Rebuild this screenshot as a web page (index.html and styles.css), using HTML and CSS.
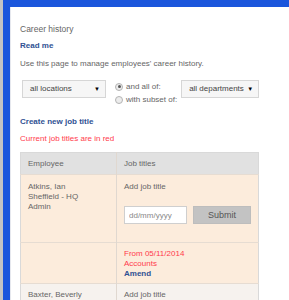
FILE: index.html
```html
<!DOCTYPE html>
<html lang="en">
<head>
    <title>Career history</title>

    <link rel="stylesheet" href="styles.css">

</head>
<body>
  <div class="frame">
    <div class="content">
      <p class="title">Career history</p>

      <p class="link read-me">Read me</p>

      <p class="intro">Use this page to manage employees' career history.</p>

      <div class="filters">
        <div class="select locations">
          <span>all locations</span>
          <span class="arrow">&#9660;</span>
        </div>

        <div class="radios">
          <label class="radio-row">
            <span class="radio checked"></span>
            and all of:
          </label>
          <label class="radio-row">
            <span class="radio"></span>
            with subset of:
          </label>
        </div>

        <div class="select departments">
          <span>all departments</span>
          <span class="arrow">&#9660;</span>
        </div>
      </div>

      <p class="link create">Create new job title</p>

      <p class="note">Current job titles are in red</p>

      <table class="history">
        <tr>
          <th class="employee-col">Employee</th>
          <th>Job titles</th>
        </tr>
        <tr class="odd">
          <td>
            Atkins, Ian<br>
            Sheffield - HQ<br>
            Admin
          </td>
          <td class="add-cell">
            Add job title
            <div class="add-form">
              <input class="date-input" type="text" placeholder="dd/mm/yyyy">
              <button class="submit-button">Submit</button>
            </div>
          </td>
        </tr>
        <tr class="odd">
          <td></td>
          <td class="job-cell">
            <span class="current">From 05/11/2014</span><br>
            <span class="current">Accounts</span><br>
            <span class="amend">Amend</span>
          </td>
        </tr>
        <tr class="even">
          <td>
            Baxter, Beverly<br>
            Leeds<br>
            Sales
          </td>
          <td class="add-cell">
            Add job title
            <div class="add-form">
              <input class="date-input" type="text" placeholder="dd/mm/yyyy">
              <button class="submit-button">Submit</button>
            </div>
          </td>
        </tr>
      </table>
    </div>
  </div>
</body>
</html>
```

FILE: styles.css
```css
body {
  margin: 0;
  background-color: #c4c4c4;
  font-family: "Liberation Sans", Arial, sans-serif;
  font-size: 8px;
  line-height: 10px;
  color: #666;
}

p {
  margin: 0;
}

.frame {
  margin-left: 3px;
  border-top: 7px solid #1b56dc;
  border-left: 7px solid #1b56dc;
  background-color: white;
}

.content {
  padding: 17px 10px 20px 9px;
  border-left: 1px solid #e6e8ee;
}

.title {
  font-size: 8.5px;
}

.link {
  font-weight: bold;
  color: #2f5193;
}

.read-me {
  margin-top: 7px;
}

.intro {
  margin-top: 8px;
}

.filters {
  display: flex;
  align-items: flex-start;
  margin-top: 11px;
}

.select {
  display: flex;
  align-items: center;
  justify-content: space-between;
  box-sizing: border-box;
  height: 18px;
  padding: 0 5px 0 7px;
  border: 1px solid #d6d6d6;
  background-color: #f6f6f6;
  color: #444;
}

.locations {
  width: 84px;
  margin-left: 2px;
}

.departments {
  width: 78px;
  margin-left: 4px;
}

.arrow {
  font-size: 6px;
  color: #000;
}

.radios {
  display: flex;
  flex-direction: column;
  margin-left: 9px;
}

.radio-row {
  display: flex;
  align-items: center;
  gap: 3px;
  height: 13px;
}

.radio {
  display: flex;
  align-items: center;
  justify-content: center;
  box-sizing: border-box;
  width: 8px;
  height: 8px;
  border: 1px solid #b4b4b4;
  border-radius: 50%;
  background-color: #ececec;
}

.radio.checked::after {
  content: "";
  width: 3px;
  height: 3px;
  border-radius: 50%;
  background-color: #555;
}

.create {
  margin-top: 11px;
}

.note {
  margin-top: 7px;
  color: #ff3a4c;
}

.history {
  width: 239px;
  margin-top: 8px;
  border-collapse: collapse;
  border: 1px solid #d9d9d9;
}

.history th {
  padding: 6px 7px 5px;
  background-color: #e1e1e1;
  font-weight: normal;
  text-align: left;
}

.employee-col {
  width: 83px;
}

.history td {
  padding: 6px 7px 4px;
  vertical-align: top;
  border-top: 1px solid #e6dcd2;
}

.history td + td,
.history th + th {
  border-left: 1px solid #e0d8d0;
}

.odd td {
  background-color: #fcecdc;
}

.even td {
  background-color: #f6f2ee;
}

.history .add-cell {
  padding-top: 7px;
  padding-bottom: 18px;
}

.odd td:first-child {
  padding-top: 7px;
}

.even td:first-child {
  padding-top: 6px;
}

.history .even .add-cell {
  padding-top: 6px;
}

.add-form {
  display: flex;
  gap: 6px;
  margin-top: 14px;
}

.date-input {
  box-sizing: border-box;
  width: 63px;
  height: 18px;
  padding: 0 4px;
  border: 1px solid #cfcfcf;
  background-color: white;
  font-family: "Liberation Sans", Arial, sans-serif;
  font-size: 8px;
}

.date-input::placeholder {
  color: #888;
}

.submit-button {
  box-sizing: border-box;
  width: 58px;
  height: 18px;
  border: 1px solid #bdbdbd;
  background-color: #c3c3c3;
  color: #555;
  font-family: "Liberation Sans", Arial, sans-serif;
  font-size: 9px;
}

.current {
  color: #ff3a4c;
}

.amend {
  font-weight: bold;
  color: #2f5193;
}
```
